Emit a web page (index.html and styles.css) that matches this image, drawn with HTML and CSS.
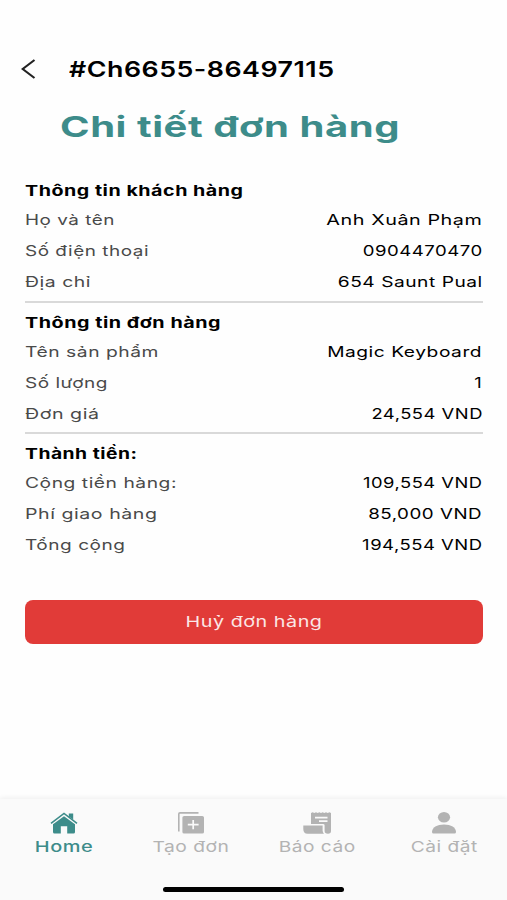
FILE: index.html
```html
<!DOCTYPE html>

<html lang="vi">

<head>

<meta charset="utf-8">
<title>Chi tiết đơn hàng</title>

<link rel="stylesheet" href="styles.css">

</head>

<body>

<div class="screen">

<header class="header">
	<svg class="back" width="15" height="20" viewBox="0 0 15 20"><path d="M13.5 1 L1.7 10 L13.5 19"/></svg>
	<div class="code"><span data-width="265.5">#Ch6655-86497115</span></div>
</header>

<h1 class="title"><span data-width="340">Chi tiết đơn hàng</span></h1>

<main class="content">

	<section class="block">
		<h2><span data-width="218.5">Thông tin khách hàng</span></h2>
		<div class="row"><span class="label" data-width="90">Họ và tên</span><span class="value" data-width="156">Anh Xuân Phạm</span></div>
		<div class="row"><span class="label" data-width="124">Số điện thoại</span><span class="value" data-width="120">0904470470</span></div>
		<div class="row"><span class="label" data-width="66">Địa chỉ</span><span class="value" data-width="145">654 Saunt Pual</span></div>
	</section>

	<section class="block">
		<h2><span data-width="196">Thông tin đơn hàng</span></h2>
		<div class="row"><span class="label" data-width="134">Tên sản phẩm</span><span class="value" data-width="155">Magic Keyboard</span></div>
		<div class="row"><span class="label" data-width="83">Số lượng</span><span class="value" data-width="8">1</span></div>
		<div class="row"><span class="label" data-width="74.5">Đơn giá</span><span class="value" data-width="111.5">24,554 VND</span></div>
	</section>

	<section class="block">
		<h2><span data-width="112.5">Thành tiền:</span></h2>
		<div class="row"><span class="label" data-width="152">Cộng tiền hàng:</span><span class="value" data-width="119.5">109,554 VND</span></div>
		<div class="row"><span class="label" data-width="132.5">Phí giao hàng</span><span class="value" data-width="114">85,000 VND</span></div>
		<div class="row"><span class="label" data-width="100.5">Tổng cộng</span><span class="value" data-width="120.5">194,554 VND</span></div>
	</section>

	<button class="cancel"><span data-width="137">Huỷ đơn hàng</span></button>

</main>

<nav class="tabs">
	<div class="tablist">
	<a class="tab active">
		<svg width="28" height="22" viewBox="0 0 28 22">
			<path d="M14 4.2 L25 12.2 V20 Q25 21.5 23.5 21.5 H17.2 V14.3 H10.8 V21.5 H4.5 Q3 21.5 3 20 V12.2 Z"/>
			<path d="M18.8 1.6 H23.2 V7.6 L18.8 4.4 Z"/>
			<path class="line" d="M1 11.3 L14 1.4 L27 11.3"/>
		</svg>
		<span data-width="58.5">Home</span>
	</a>
	<a class="tab">
		<svg width="28" height="22" viewBox="0 0 28 22">
			<path class="line" d="M1.8 19.5 V2 Q1.8 .9 3 .9 H21.5"/>
			<path d="M6.3 4 H25.2 Q27 4 27 5.6 V20 Q27 21.6 25.2 21.6 H7.2 Q5.4 21.6 5.4 20 V5.6 Q5.4 4 7.2 4 Z"/>
			<path class="plus" d="M16.2 8 V17.2 M10.8 12.6 H21.6"/>
		</svg>
		<span data-width="77">Tạo đơn</span>
	</a>
	<a class="tab">
		<svg width="28" height="22" viewBox="0 0 28 22">
			<path d="M8 1 L9.7 .3 L11.3 1 L13 .3 L14.7 1 L16.3 .3 L18 1 L19.7 .3 L21.3 1 L23 .3 L24.7 1 L26.4 .3 L28 1 V19 Q28 21.7 25 21.7 Q21.6 21.7 21.6 19 V13.2 Q21.6 12 20 12 H8 Z"/>
			<path d="M.3 13.6 H19.6 V18.5 Q19.6 20.5 21 21.7 H4.5 Q.3 21.7 .3 17 Z"/>
			<path class="cut" d="M12 5.6 H24.5 M16 9.2 H24.5"/>
		</svg>
		<span data-width="77">Báo cáo</span>
	</a>
	<a class="tab">
		<svg width="28" height="22" viewBox="0 0 28 22">
			<ellipse cx="14" cy="5.3" rx="6.1" ry="5.2"/>
			<path d="M2 20 C2 15.2 7 12.4 14 12.4 S26 15.2 26 20 Q26 21.6 24.4 21.6 H3.6 Q2 21.6 2 20 Z"/>
		</svg>
		<span data-width="67">Cài đặt</span>
	</a>
	</div>
	<div class="indicator"></div>
</nav>

</div>

<script src="script.js"></script>

</body>

</html>
```
FILE: styles.css
```css
* { box-sizing: border-box; }

body {
	margin: 0;
	background-color: #fefefe;
	color: #000;
	font-family: Inter, "Noto Sans", sans-serif;
}

.screen {
	display: flex;
	flex-direction: column;
	height: 900px;
	overflow: hidden;
}

span {
	display: inline-block;
	white-space: nowrap;
	letter-spacing: 0.4px;
	transform-origin: left center;
}

/* top bar */

.header {
	display: flex;
	align-items: center;
	height: 40px;
	margin-top: 49px;
	padding-left: 20.5px;
}

.back {
	fill: none;
	stroke: #222;
	stroke-width: 2.2;
	margin-right: 33.5px;
}

.code {
	font-size: 22px;
	font-weight: 600;
}

.title {
	margin: 18px 0 0 59.5px;
	height: 40px;
	line-height: 40px;
	font-size: 29px;
	font-weight: 700;
	color: #3d8c8a;
}

/* order details */

.content {
	margin-top: 27px;
	padding: 0 24.5px 0 25px;
}

.block {
	height: 131.5px;
	padding-top: 4px;
	font-size: 14.5px;
	border-bottom: 2px solid #d9d9d9;
}

.block:first-child { height: 128.5px; padding-top: 1px; }
.block:nth-child(3) { border: none; }

.block h2 {
	margin: 0;
	height: 30px;
	line-height: 31px;
	font-size: 15px;
	font-weight: 700;
}

.row {
	display: flex;
	justify-content: space-between;
	height: 31px;
	line-height: 29px;
}

.label { color: #4a4a4a; }

.value {
	font-weight: 400;
	color: #000;
	transform-origin: right center;
}

.cancel {
	display: block;
	width: 100%;
	height: 44px;
	margin-top: 34px;
	padding: 0;
	border: none;
	border-radius: 8px;
	background-color: #e13b38;
	color: #fbe6e5;
	font: 400 15px Inter, "Noto Sans", sans-serif;
}

.cancel span, .tab span { transform-origin: center; }

/* bottom navigation */

.tabs {
	height: 101px;
	margin-top: auto;
	background-color: #fafafa;
	box-shadow: 0 -1px 5px #eeeeee;
}

.tablist {
	display: grid;
	grid-template-columns: repeat(4, 1fr);
	height: 86px;
	padding-top: 13px;
}

.tab {
	display: flex;
	flex-direction: column;
	align-items: center;
	padding-left: 1px;
	font-size: 15px;
	line-height: 26px;
	color: #b3b3b3;
}

.tab svg { fill: currentColor; }
.tab.active { color: #3d8c8a; font-weight: 500; }

.line { fill: none; stroke: currentColor; stroke-width: 1.6; }
.plus, .cut { fill: none; stroke: #fafafa; stroke-width: 1.7; }

.indicator {
	width: 181px;
	height: 5px;
	margin: 2px auto 0;
	border-radius: 3px;
	background-color: #000;
}
```
FILE: script.js
```js
// stretch the wide lettering to its measured width
var texts = document.querySelectorAll("[data-width]");

for (var i = 0; i < texts.length; i++) {

var w = texts[i].getBoundingClientRect().width;
texts[i].style.transform = "scaleX(" + texts[i].dataset.width / w + ")";

}
```
